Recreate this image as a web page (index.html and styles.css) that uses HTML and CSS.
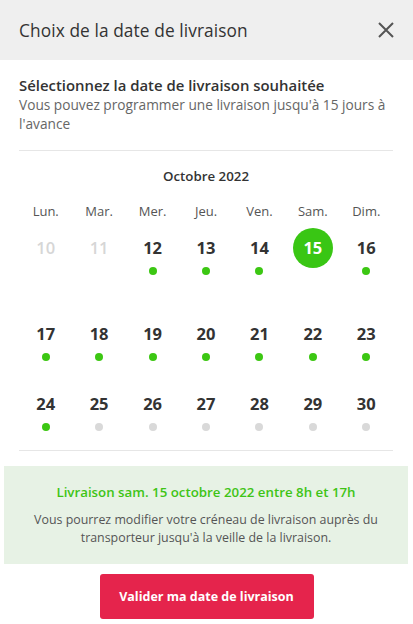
FILE: index.html
```html
<!DOCTYPE html>
<html lang="fr">
<head>
<meta charset="utf-8">
<link rel="stylesheet" href="styles.css">
</head>
<body>
<div class="modal">
  <header class="head">
    <h1 class="title">Choix de la date de livraison</h1>
    <button class="close" aria-label="Fermer">
      <svg width="18" height="18" viewBox="0 0 18 18"><path d="M2 2 L16 16 M16 2 L2 16" stroke="#555" stroke-width="2" fill="none"/></svg>
    </button>
  </header>
  <section class="intro">
    <h2 class="intro-title">Sélectionnez la date de livraison souhaitée</h2>
    <p class="intro-text">Vous pouvez programmer une livraison jusqu'à 15 jours à l'avance</p>
  </section>
  <section class="cal">
    <div class="month">Octobre 2022</div>
    <div class="grid wd">
      <span>Lun.</span><span>Mar.</span><span>Mer.</span><span>Jeu.</span><span>Ven.</span><span>Sam.</span><span>Dim.</span>
    </div>
    <div class="grid row r1">
      <div class="day off"><span class="num">10</span></div>
      <div class="day off"><span class="num">11</span></div>
      <div class="day"><span class="num">12</span><i class="dot"></i></div>
      <div class="day"><span class="num">13</span><i class="dot"></i></div>
      <div class="day"><span class="num">14</span><i class="dot"></i></div>
      <div class="day sel"><span class="num">15</span></div>
      <div class="day"><span class="num">16</span><i class="dot"></i></div>
    </div>
    <div class="grid row r2">
      <div class="day"><span class="num">17</span><i class="dot"></i></div>
      <div class="day"><span class="num">18</span><i class="dot"></i></div>
      <div class="day"><span class="num">19</span><i class="dot"></i></div>
      <div class="day"><span class="num">20</span><i class="dot"></i></div>
      <div class="day"><span class="num">21</span><i class="dot"></i></div>
      <div class="day"><span class="num">22</span><i class="dot"></i></div>
      <div class="day"><span class="num">23</span><i class="dot"></i></div>
    </div>
    <div class="grid row r3">
      <div class="day"><span class="num">24</span><i class="dot"></i></div>
      <div class="day"><span class="num">25</span><i class="dot grey"></i></div>
      <div class="day"><span class="num">26</span><i class="dot grey"></i></div>
      <div class="day"><span class="num">27</span><i class="dot grey"></i></div>
      <div class="day"><span class="num">28</span><i class="dot grey"></i></div>
      <div class="day"><span class="num">29</span><i class="dot grey"></i></div>
      <div class="day"><span class="num">30</span><i class="dot grey"></i></div>
    </div>
  </section>
  <section class="info">
    <p class="info-title">Livraison sam. 15 octobre 2022 entre 8h et 17h</p>
    <p class="info-text">Vous pourrez modifier votre créneau de livraison auprès du transporteur jusqu'à la veille de la livraison.</p>
  </section>
  <div class="actions">
    <button class="validate">Valider ma date de livraison</button>
  </div>
</div>
</body>
</html>
```
FILE: styles.css
```css
* { box-sizing: border-box; }
html, body { margin: 0; padding: 0; background: #fff; }
body { font-family: "Open Sans", "DejaVu Sans", sans-serif; color: #333; width: 413px; height: 624px; overflow: hidden; }
.modal { display: flex; flex-direction: column; }
.head { height: 60px; background: #efefef; display: flex; align-items: center; justify-content: space-between; padding: 0 18px 0 19px; }
.title { margin: 0; font-size: 17.3px; font-weight: 500; color: #333; letter-spacing: 0.1px; }
.close { border: 0; background: none; padding: 0; width: 18px; height: 18px; display: flex; cursor: pointer; }
.intro { margin: 0 20px 0 19px; padding-top: 15px; height: 91px; border-bottom: 1px solid #e6e6e6; }
.intro-title { margin: 0; font-size: 14.9px; font-weight: 600; line-height: 20px; color: #333; }
.intro-text { margin: 0; font-size: 13.7px; line-height: 19px; color: #666; }
.cal { margin: 0 20px 0 19px; border-bottom: 1px solid #e6e6e6; padding-top: 15px; height: 300px; overflow: hidden; }
.month { text-align: center; font-size: 13.3px; font-weight: 600; line-height: 20px; color: #333; }
.grid { display: grid; grid-template-columns: repeat(7, 1fr); }
.wd { margin-top: 16px; text-align: center; font-size: 13px; line-height: 18px; color: #555; }
.r1 { height: 101px; padding-top: 8px; }
.r2 { height: 70px; }
.r3 { height: 57px; }
.day { display: flex; flex-direction: column; align-items: center; }
.num { width: 40px; height: 40px; display: flex; align-items: center; justify-content: center; font-size: 16.5px; font-weight: 700; color: #333; line-height: 1; }
.r2 .num, .r3 .num { height: 26px; }
.off .num { color: #d6d6d6; font-weight: 600; }
.sel .num { background: #39c614; color: #fff; border-radius: 50%; }
.dot { display: block; width: 8px; height: 8px; border-radius: 50%; background: #3cc713; margin-top: 6px; }
.r1 .dot { margin-top: -1px; }
.dot.grey { background: #d9d9d9; }
.info { margin: 15px 5px 0 4px; background: #e7f2e5; height: 98px; padding-top: 16px; text-align: center; }
.info-title { margin: 0; font-size: 13.3px; font-weight: 600; color: #3ec416; line-height: 20px; }
.info-text { margin: 9px 16px 0; font-size: 12.4px; line-height: 18px; color: #555; }
.actions { display: flex; justify-content: center; margin-top: 10px; }
.validate { width: 214px; height: 45px; border: 0; border-radius: 3px; background: #e5244c; color: #fff; font-family: inherit; font-size: 12.5px; font-weight: 700; }
```
